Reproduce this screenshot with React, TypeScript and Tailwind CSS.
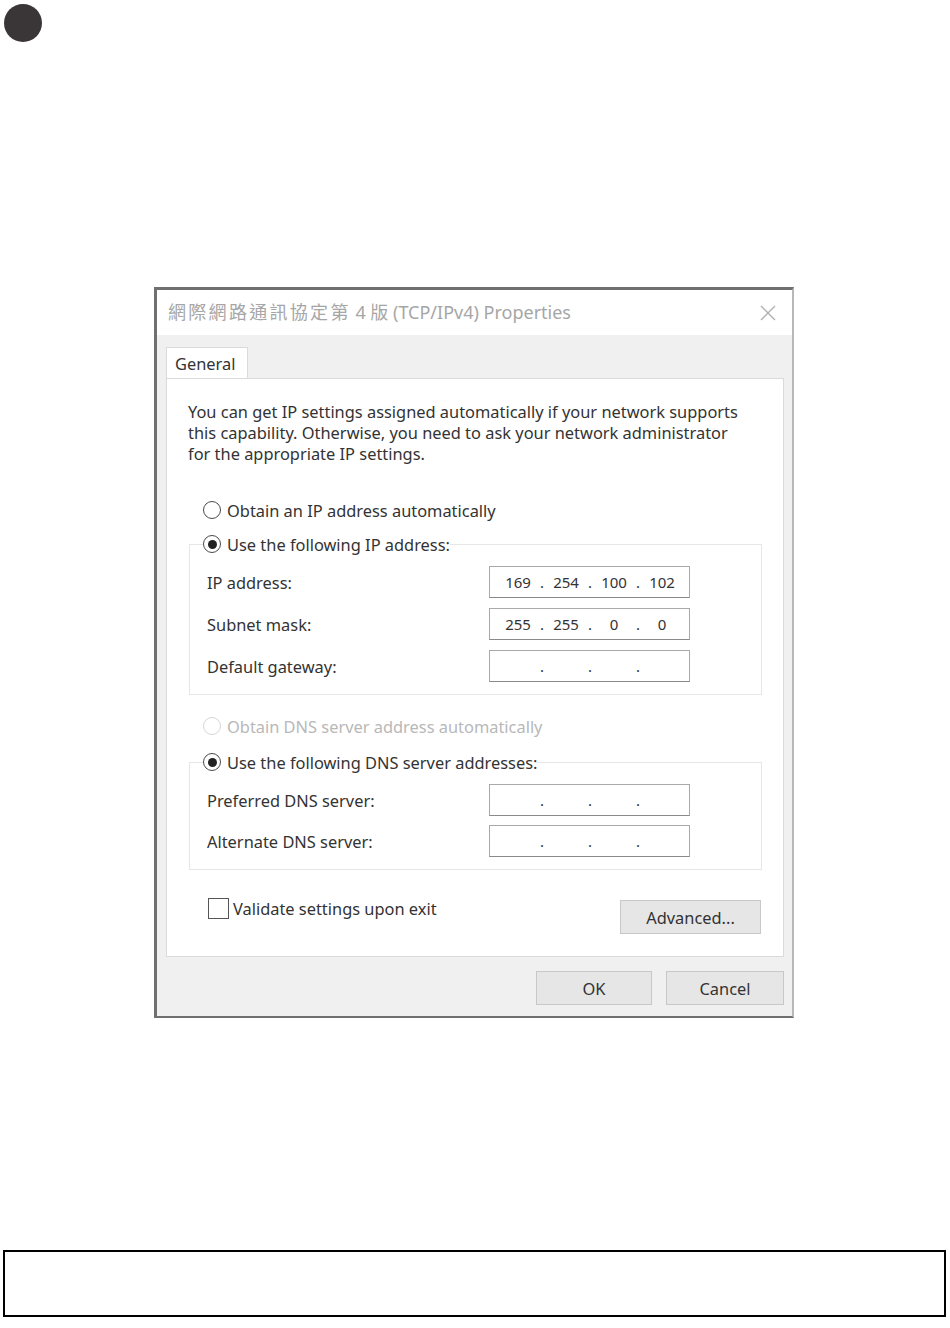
const FONT = "font-['Noto_Sans','Noto_Sans_CJK_TC',sans-serif]";

function Radio({ checked, disabled }: { checked?: boolean; disabled?: boolean }) {
  return (
    <span
      className={`flex h-[18px] w-[18px] shrink-0 items-center justify-center rounded-full border bg-white ${
        disabled ? "border-[#d6d6d6]" : "border-[#4a4a4a]"
      }`}
    >
      {checked && <span className="h-[9px] w-[9px] rounded-full bg-[#222]" />}
    </span>
  );
}

function RadioRow({
  label,
  checked,
  disabled,
}: {
  label: string;
  checked?: boolean;
  disabled?: boolean;
}) {
  return (
    <div className="flex h-[24px] items-center gap-[6px]">
      <Radio checked={checked} disabled={disabled} />
      <span className={disabled ? "text-[#b8b8b8]" : "text-[#333]"}>{label}</span>
    </div>
  );
}

function IpBox({ parts }: { parts?: string[] }) {
  const p = parts ?? ["", "", "", ""];
  return (
    <div className="flex h-[32px] w-[201px] items-center border border-[#a9a9a9] border-b-[#8a8a8a] bg-white pl-[8px] text-[15px] text-[#333]">
      {p.map((v, i) => (
        <div key={i} className="flex items-center">
          {i > 0 && <span className="w-[8px] text-center">.</span>}
          <span className="w-[40px] text-center">{v}</span>
        </div>
      ))}
    </div>
  );
}

function Field({ label, parts }: { label: string; parts?: string[] }) {
  return (
    <div className="flex items-center justify-between pl-[17px] pr-[71px]">
      <span className="text-[#333]">{label}</span>
      <IpBox parts={parts} />
    </div>
  );
}

function Group({
  legend,
  children,
}: {
  legend: React.ReactNode;
  children: React.ReactNode;
}) {
  return (
    <fieldset className="ml-[22px] mr-[21px] border border-[#e6e6e6]">
      <legend className="ml-[13px]">{legend}</legend>
      {children}
    </fieldset>
  );
}

function Button({ children, w }: { children: React.ReactNode; w: string }) {
  return (
    <div
      className={`flex h-[34px] ${w} items-center justify-center border border-[#c8c8c8] bg-[#e6e6e6] text-[#333]`}
    >
      {children}
    </div>
  );
}

export default function App() {
  return (
    <div className={`min-h-[1328px] w-[950px] bg-white ${FONT} text-[16.4px] leading-[21px]`}>
      {/* step marker */}
      <div className="ml-[4px] pt-[4px]">
        <div className="h-[38px] w-[38px] rounded-full bg-[#3a3536]" />
      </div>

      {/* dialog */}
      <div className="ml-[154px] mt-[245px] flex h-[731px] w-[640px] flex-col border-b-2 border-l-[3px] border-r-2 border-t-[3px] border-b-[#707070] border-l-[#707070] border-r-[#b8b8b8] border-t-[#707070] bg-[#f0f0f0]">
        <div className="flex h-[45px] items-center justify-between bg-white pl-[11px] pr-[14px]">
          <span className="text-[18px] text-[#a6a6a6]">
            <span className="tracking-[2.3px]">網際網路通訊協定第</span> 4 版 (TCP/IPv4) Properties
          </span>
          <svg width="16" height="16" viewBox="0 0 16 16" className="mr-[2px]">
            <path d="M1 1 L15 15 M15 1 L1 15" stroke="#b0b0b0" strokeWidth="1.3" fill="none" />
          </svg>
        </div>

        <div className="flex flex-1 flex-col pl-[9px] pr-[8px] pt-[12px]">
          {/* tab */}
          <div className="flex">
            <div className="-mb-px flex h-[32px] w-[82px] items-center border border-b-0 border-[#dadada] bg-white pl-[8px] text-[#333]">
              General
            </div>
          </div>

          {/* panel */}
          <div className="flex h-[579px] flex-col border border-[#dadada] bg-white">
            <p className="pl-[21px] pr-[10px] pt-[22px] text-[#333]">
              You can get IP settings assigned automatically if your network supports
              <br />
              this capability. Otherwise, you need to ask your network administrator
              <br />
              for the appropriate IP settings.
            </p>

            <div className="mt-[34px] pl-[36px]">
              <RadioRow label="Obtain an IP address automatically" />
            </div>

            <div className="mt-[10px]">
              <Group legend={<RadioRow label="Use the following IP address:" checked />}>
                <div className="flex flex-col gap-[10px] pb-[12px] pt-[10px]">
                  <Field label="IP address:" parts={["169", "254", "100", "102"]} />
                  <Field label="Subnet mask:" parts={["255", "255", "0", "0"]} />
                  <Field label="Default gateway:" />
                </div>
              </Group>
            </div>

            <div className="mt-[19px] pl-[36px]">
              <RadioRow label="Obtain DNS server address automatically" disabled />
            </div>

            <div className="mt-[12px]">
              <Group legend={<RadioRow label="Use the following DNS server addresses:" checked />}>
                <div className="flex flex-col gap-[9px] pb-[12px] pt-[10px]">
                  <Field label="Preferred DNS server:" />
                  <Field label="Alternate DNS server:" />
                </div>
              </Group>
            </div>

            <div className="mt-[28px] flex items-start justify-between pl-[41px] pr-[22px]">
              <div className="flex items-center gap-[4px]">
                <span className="h-[21px] w-[21px] border border-[#555] bg-white" />
                <span className="text-[#333]">Validate settings upon exit</span>
              </div>
              <div className="mt-[2px]">
                <Button w="w-[141px]">Advanced...</Button>
              </div>
            </div>
          </div>

          {/* footer buttons */}
          <div className="mt-[14px] flex justify-end gap-[14px]">
            <Button w="w-[116px]">OK</Button>
            <Button w="w-[118px]">Cancel</Button>
          </div>
        </div>
      </div>

      {/* note box */}
      <div className="ml-[3px] mt-[232px] h-[67px] w-[943px] border-2 border-black" />
    </div>
  );
}
